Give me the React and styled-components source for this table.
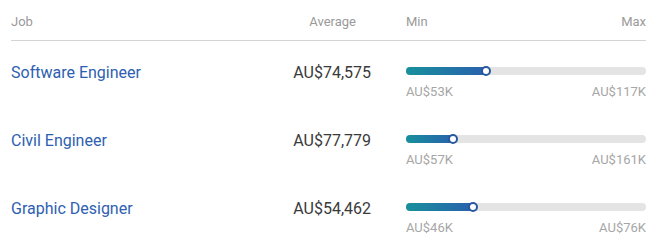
import React from "react";
import styled, { createGlobalStyle } from "styled-components";

const Global = createGlobalStyle`
  html, body { margin: 0; padding: 0; background: #fff; }
  body { font-family: Roboto, "Liberation Sans", Arial, sans-serif; }
`;

const Table = styled.div`
  padding: 0 14px 0 11px;
`;

const Header = styled.div`
  display: grid;
  grid-template-columns: 1fr 150px 240px;
  column-gap: 35px;
  height: 41px;
  box-sizing: border-box;
  padding-top: 14px;
  border-bottom: 1px solid #d4d4d4;
  font-size: 13px;
  line-height: 15px;
  color: #9a9a9a;
`;

const HeadCell = styled.div`
  text-align: ${(p) => p.$align || "left"};
  padding-right: ${(p) => p.$pr || 0}px;
`;

const RangeHead = styled.div`
  display: flex;
  justify-content: space-between;
`;

const Row = styled.div`
  display: grid;
  grid-template-columns: 1fr 150px 240px;
  column-gap: 35px;
  height: 68px;
  box-sizing: border-box;
  padding-top: 22px;
  align-items: start;
`;

const JobName = styled.a`
  font-size: 16px;
  line-height: 20px;
  color: #2d60b0;
  text-decoration: none;
`;

const Average = styled.div`
  font-size: 16px;
  line-height: 20px;
  color: #3a3a3a;
  text-align: right;
`;

const RangeCell = styled.div`
  padding-top: 4px;
`;

const Track = styled.div`
  position: relative;
  height: 8px;
  border-radius: 4px;
  background: #e4e4e4;
`;

const Fill = styled.div`
  position: absolute;
  left: 0;
  top: 0;
  bottom: 0;
  border-radius: 4px;
  background: linear-gradient(90deg, #17909c 0%, #2a5fae 100%);
`;

const Knob = styled.div`
  position: absolute;
  top: 50%;
  width: 6px;
  height: 6px;
  margin-left: -6px;
  margin-top: -5px;
  border-radius: 50%;
  background: #fff;
  border: 2px solid #27589f;
`;

const Labels = styled.div`
  display: flex;
  justify-content: space-between;
  margin-top: 9px;
  font-size: 13px;
  line-height: 15px;
  color: #a6a6a6;
`;

const data = [
  { job: "Software Engineer", avg: 74575, min: 53, max: 117 },
  { job: "Civil Engineer", avg: 77779, min: 57, max: 161 },
  { job: "Graphic Designer", avg: 54462, min: 46, max: 76 },
];

export default function App() {
  return (
    <>
      <Global />
      <Table>
        <Header>
          <HeadCell>Job</HeadCell>
          <HeadCell $align="right" $pr={15}>Average</HeadCell>
          <RangeHead>
            <span>Min</span>
            <span>Max</span>
          </RangeHead>
        </Header>
        {data.map((d) => {
          const frac = (d.avg - d.min * 1000) / ((d.max - d.min) * 1000);
          const w = Math.round(frac * 240);
          return (
            <Row key={d.job}>
              <div>
                <JobName href="#">{d.job}</JobName>
              </div>
              <Average>AU${d.avg.toLocaleString("en-US")}</Average>
              <RangeCell>
                <Track>
                  <Fill style={{ width: w + 2 }} />
                  <Knob style={{ left: w }} />
                </Track>
                <Labels>
                  <span>AU${d.min}K</span>
                  <span>AU${d.max}K</span>
                </Labels>
              </RangeCell>
            </Row>
          );
        })}
      </Table>
    </>
  );
}
